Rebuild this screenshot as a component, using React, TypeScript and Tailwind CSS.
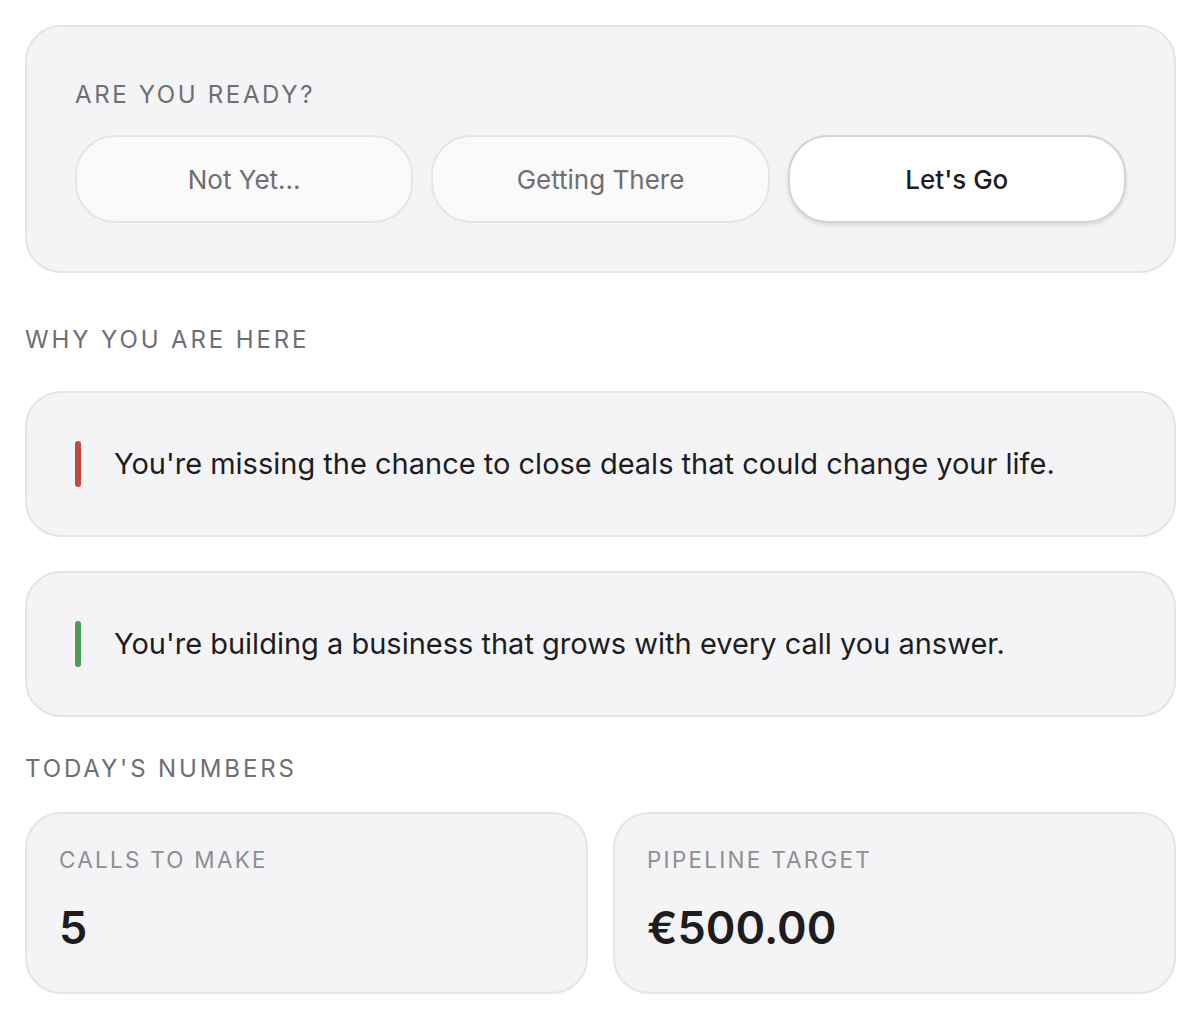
import React from "react";

function Pill({ label, active }: { label: string; active?: boolean }) {
  return (
    <button
      className={
        active
          ? "h-[88px] rounded-[40px] border-2 border-[#d4d4d8] bg-white text-[26px] font-medium text-[#1d1d1f] shadow-[0_2px_4px_rgba(0,0,0,0.12)]"
          : "h-[88px] rounded-[40px] border-2 border-[#e5e5e8] bg-[#fafafa] text-[26px] text-[#6e6e73]"
      }
    >
      {label}
    </button>
  );
}

function Reason({ color, text }: { color: string; text: string }) {
  return (
    <div className="flex items-center rounded-[36px] border-2 border-[#e5e5e8] bg-[#f4f4f6] px-12 py-12">
      <div className={`h-[46px] w-[6px] rounded-full ${color}`} />
      <p className="ml-[33px] text-[29px] leading-[46px] text-[#1d1d1f]">{text}</p>
    </div>
  );
}

function Stat({ label, value }: { label: string; value: string }) {
  return (
    <div className="flex h-[182px] flex-col rounded-[36px] border-2 border-[#e5e5e8] bg-[#f4f4f6] px-8 pt-8">
      <div className="text-[22.5px] leading-[28px] tracking-[0.1em] text-[#8e8e93]">{label}</div>
      <div className="mt-8 text-[45px] font-semibold leading-[44px] text-[#1d1d1f]">{value}</div>
    </div>
  );
}

export default function App() {
  return (
    <div className="min-h-[1020px] bg-white pl-[25px] pr-[24px] pt-[25px] font-['Inter','Noto_Sans',sans-serif]">
      <div className="rounded-[36px] border-2 border-[#e5e5e8] bg-[#f4f4f6] px-12 pb-12 pt-[52px]">
        <div className="text-[24px] leading-8 tracking-[0.11em] text-[#6e6e73]">ARE YOU READY?</div>
        <div className="mt-6 grid grid-cols-3 gap-[18px]">
          <Pill label="Not Yet..." />
          <Pill label="Getting There" />
          <Pill label="Let's Go" active />
        </div>
      </div>

      <div className="mt-[51px] text-[24px] leading-8 tracking-[0.12em] text-[#6e6e73]">WHY YOU ARE HERE</div>
      <div className="mt-[35px] flex flex-col gap-[34px]">
        <Reason
          color="bg-[#c9463d]"
          text="You're missing the chance to close deals that could change your life."
        />
        <Reason
          color="bg-[#4a9e55]"
          text="You're building a business that grows with every call you answer."
        />
      </div>

      <div className="mt-[36px] text-[24px] leading-8 tracking-[0.12em] text-[#6e6e73]">TODAY'S NUMBERS</div>
      <div className="mt-[27px] grid grid-cols-2 gap-[25px]">
        <Stat label="CALLS TO MAKE" value="5" />
        <Stat label="PIPELINE TARGET" value="€500.00" />
      </div>
    </div>
  );
}
